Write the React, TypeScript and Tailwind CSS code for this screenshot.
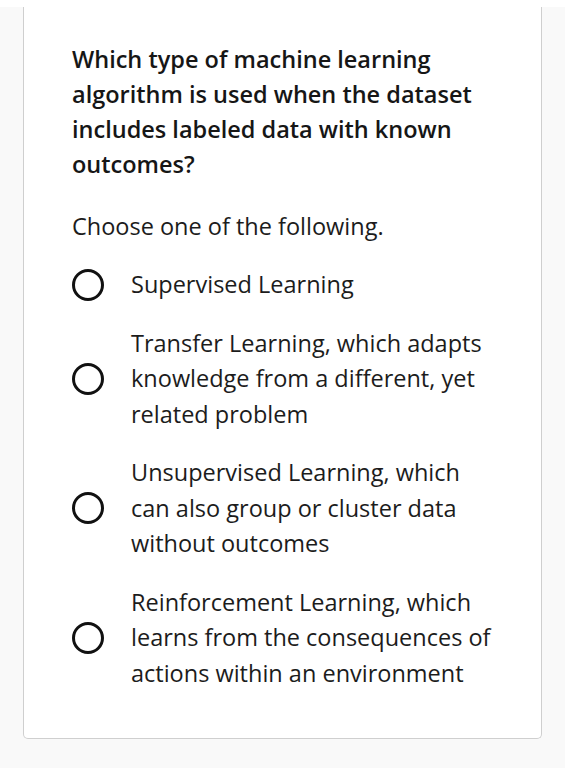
import React from "react";

const options = [
  "Supervised Learning",
  "Transfer Learning, which adapts knowledge from a different, yet related problem",
  "Unsupervised Learning, which can also group or cluster data without outcomes",
  "Reinforcement Learning, which learns from the consequences of actions within an environment",
];

export default function App() {
  return (
    <div
      className="min-h-[768px] bg-[#f9f9f9] text-[#1c1c1c]"
      style={{ fontFamily: '"Open Sans", "Noto Sans", sans-serif' }}
    >
      <div className="h-[7px] bg-white" />
      <div className="mx-[23px] w-[519px] rounded-b-[5px] border-x border-b border-[#cfcfcf] bg-white pl-[48px] pr-[24px] pt-[35px] pb-[47px]">
        <h1 className="w-[420px] text-[23.5px] font-semibold leading-[35px] text-[#161616]">
          Which type of machine learning algorithm is used when the dataset
          includes labeled data with known outcomes?
        </h1>
        <p className="mt-[30px] text-[23.5px] leading-[28px]">Choose one of the following.</p>
        <div className="mt-[27px] flex flex-col gap-[23px]">
          {options.map((o) => (
            <label key={o} className="flex items-center">
              <span className="h-[32px] w-[32px] shrink-0 rounded-full border-[3px] border-[#111]" />
              <span className="ml-[27px] w-[365px] text-[23.5px] leading-[35.5px]">{o}</span>
            </label>
          ))}
        </div>
      </div>
    </div>
  );
}
